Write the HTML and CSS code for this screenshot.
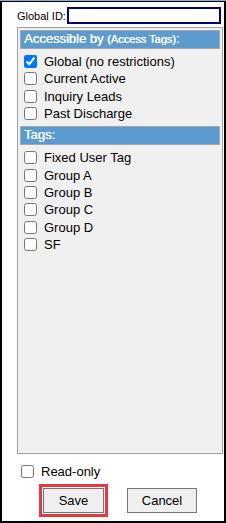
FILE: index.html
```html
<!DOCTYPE html>
<html>
<head>
<meta charset="utf-8">
<link rel="stylesheet" href="styles.css">
</head>
<body>
<div class="frame">
  <div class="idrow">
    <label class="idlabel">Global ID:</label>
    <input class="idinput" type="text">
  </div>
  <div class="panel">
    <div class="head">Accessible by <span class="small">(Access Tags)</span>:</div>
    <div class="list">
      <label class="row"><input type="checkbox" checked><span>Global (no restrictions)</span></label>
      <label class="row"><input type="checkbox"><span>Current Active</span></label>
      <label class="row"><input type="checkbox"><span>Inquiry Leads</span></label>
      <label class="row"><input type="checkbox"><span>Past Discharge</span></label>
    </div>
    <div class="head">Tags:</div>
    <div class="list">
      <label class="row"><input type="checkbox"><span>Fixed User Tag</span></label>
      <label class="row"><input type="checkbox"><span>Group A</span></label>
      <label class="row"><input type="checkbox"><span>Group B</span></label>
      <label class="row"><input type="checkbox"><span>Group C</span></label>
      <label class="row"><input type="checkbox"><span>Group D</span></label>
      <label class="row"><input type="checkbox"><span>SF</span></label>
    </div>
  </div>
  <label class="row readonly"><input type="checkbox"><span>Read-only</span></label>
  <div class="buttons">
    <div class="focus"><button class="btn save">Save</button></div>
    <button class="btn cancel">Cancel</button>
  </div>
</div>
</body>
</html>
```
FILE: styles.css
```css
html, body {
  margin: 0;
  padding: 0;
  background: #ffffff;
}
body {
  font-family: "Liberation Sans", Arial, sans-serif;
  color: #000;
}
.frame {
  box-sizing: border-box;
  width: 226px;
  height: 523px;
  border: 2px solid #000;
  position: relative;
  display: flex;
  flex-direction: column;
  padding: 5px 2px 0 15px;
  background: #fff;
}
.frame::before {
  content: "";
  position: absolute;
  left: -2px;
  right: -2px;
  top: -2px;
  height: 1px;
  background: #7fb0d8;
}
.idrow {
  display: flex;
  align-items: center;
  height: 17px;
}
.idlabel {
  font-size: 11px;
  white-space: nowrap;
  margin-right: 1px;
  flex-shrink: 0;
}
.idinput {
  box-sizing: border-box;
  flex-shrink: 0;
  width: 154px;
  height: 17px;
  border: 2px solid #00007a;
  margin: 0;
  padding: 0;
  background: #fff;
}
.panel {
  box-sizing: border-box;
  margin-top: 3px;
  width: 206px;
  height: 427px;
  border: 1px solid #a0a0a0;
  background: #f0f0f0;
  padding: 2px 2px 0 2px;
}
.head {
  box-sizing: border-box;
  height: 19px;
  background: #5b9bd0;
  border: 1px solid #a7a7a7;
  color: #fff;
  font-size: 13px;
  font-weight: normal;
  text-shadow: 0.3px 0 0 #fff;
  line-height: 16px;
  padding-left: 3px;
  white-space: nowrap;
}
.head .small {
  font-size: 11px;
}
.list {
  display: flex;
  flex-direction: column;
  padding: 4px 0 4px 4px;
}
.row {
  display: flex;
  align-items: center;
  height: 17.3px;
  font-size: 13px;
}
.row input {
  width: 13px;
  height: 13px;
  margin: 0 7px 0 0;
  accent-color: #0075ff;
}
.readonly {
  margin-top: 9px;
  padding-left: 4px;
}
.buttons {
  display: flex;
  align-items: center;
  margin-top: 4px;
  padding-left: 22px;
}
.focus {
  border: 3px solid #e8373d;
  padding: 1px;
  display: flex;
}
.btn {
  box-sizing: border-box;
  height: 25px;
  font-family: "Liberation Sans", Arial, sans-serif;
  font-size: 13px;
  background: #efefef;
  border: 1px solid #767676;
  border-radius: 0;
  padding: 0;
  color: #000;
}
.save {
  width: 61px;
}
.cancel {
  width: 70px;
  margin-left: 19px;
}
```
